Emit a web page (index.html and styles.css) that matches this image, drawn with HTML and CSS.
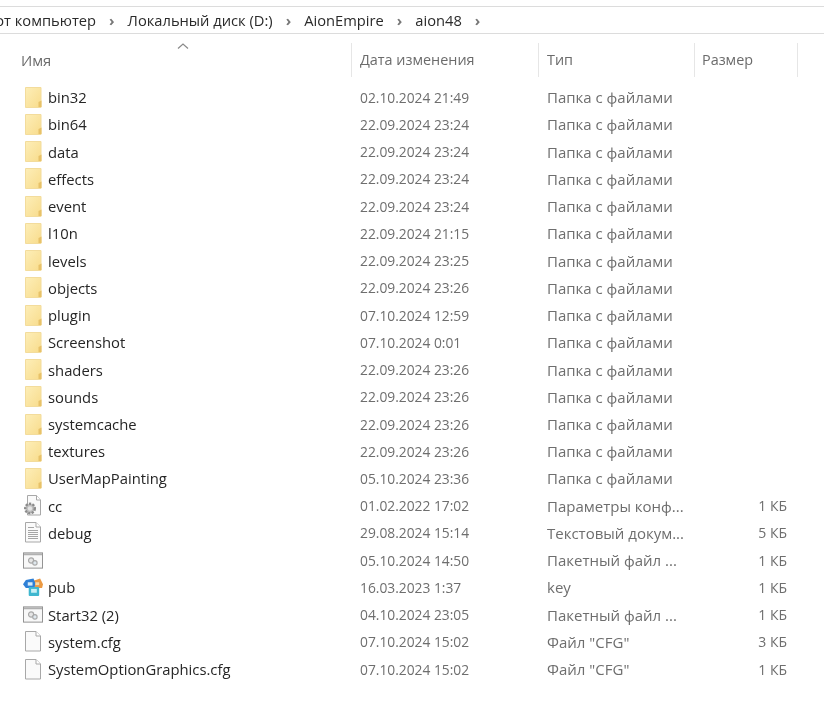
FILE: index.html
```html
<!DOCTYPE html>
<html lang="ru">
<head>
<meta charset="utf-8">
<title>aion48</title>
<link rel="stylesheet" href="styles.css">
</head>
<body>
<svg class="defs" width="0" height="0" aria-hidden="true">
  <defs>
    <linearGradient id="fg" x1="0" y1="0" x2="1" y2="1">
      <stop offset="0" stop-color="#fdeeb8"/><stop offset="1" stop-color="#f8dc8c"/>
    </linearGradient>
    <symbol id="folder" viewBox="0 0 20 21">
      <path d="M2.500 .5h15.500v20h-15.500z" fill="url(#fg)" stroke="#f3dc9c" stroke-width="1"/>
      <path d="M15.500 20v-5l3-1.500v6.500z" fill="#e8c268"/>
    </symbol>
    <symbol id="doc" viewBox="-1 0 20 21">
      <path d="M1.500 .5h10.500l4.500 4.500v15h-15z" fill="#fafafa" stroke="#a8a8a8"/>
      <path d="M12 .5v4.500h4.500" fill="#fff" stroke="#a8a8a8"/>
    </symbol>
    <symbol id="txt" viewBox="-1 0 20 21">
      <path d="M1.500 .5h10.500l4.500 4.500v15h-15z" fill="#fafafa" stroke="#a8a8a8"/>
      <path d="M12 .5v4.500h4.500" fill="#fff" stroke="#a8a8a8"/>
      <path d="M4 5.500h6M4 8.500h10M4 10.500h10M4 12.500h10M4 14.500h10M4 16.500h10" stroke="#a5a5a5" fill="none"/>
    </symbol>
    <symbol id="cfg" viewBox="0 0 20 21">
      <path d="M4.500 .5h9l4 4.500v15h-13z" fill="#fafafa" stroke="#a8a8a8"/>
      <path d="M13.500 .5v4.500h4" fill="#fff" stroke="#a8a8a8"/>
      <circle cx="7" cy="13.500" r="4.800" fill="#bdbdbd" stroke="#8c8c8c" stroke-width="2.400" stroke-dasharray="2.200 1.300"/>
      <circle cx="7" cy="13.500" r="2.200" fill="#e4e4e4"/>
    </symbol>
    <symbol id="bat" viewBox="0 0 21 21">
      <rect x=".5" y="2.500" width="20" height="16" fill="#f8f8f8" stroke="#8f8f8f"/>
      <rect x="1" y="3" width="19" height="2" fill="#b0b0b0"/>
      <circle cx="8.500" cy="10.500" r="2.700" fill="#e6e6e6" stroke="#a8a8a8" stroke-width="1.200"/>
      <circle cx="12.500" cy="13" r="2.300" fill="#dfe8ee" stroke="#a8a8a8" stroke-width="1.200"/>
    </symbol>
    <symbol id="key" viewBox="0 0 21 21">
      <path d="M11 3.500l7-2.500 3 6-1 4h-8z" fill="#ec9a43"/>
      <path d="M0 7l3-4.500 8-1.500 2 5-1 5h-9z" fill="#2f80d6"/>
      <rect x="5" y="5" width="5" height="3.500" fill="#d5ecfa"/>
      <rect x="13" y="5" width="4" height="3" fill="#f8d9a8"/>
      <rect x="6" y="10" width="11" height="9.500" rx="1" fill="#3fb7cf"/>
      <rect x="8.500" y="12" width="6" height="4" fill="#c8f0f6"/>
    </symbol>
  </defs>
</svg>

<nav class="crumbs">
  <span class="crumb">Этот компьютер</span><span class="sep">›</span>
  <span class="crumb">Локальный диск (D:)</span><span class="sep">›</span>
  <span class="crumb">AionEmpire</span><span class="sep">›</span>
  <span class="crumb">aion48</span><span class="sep">›</span>
</nav>

<div class="table">
  <header class="head">
    <div class="hcell first"><span class="sort"><svg width="12" height="6" viewBox="0 0 12 6"><path d="M1 5.500L6 1l5 4.500" fill="none" stroke="#8a8a8a" stroke-width="1.200"/></svg></span>Имя</div>
    <div class="hcell">Дата изменения</div>
    <div class="hcell">Тип</div>
    <div class="hcell tight">Размер</div>
  </header>
  <main class="rows">
    <div class="row"><span class="name"><svg class="ico"><use href="#folder"/></svg>bin32</span><span class="date">02.10.2024 21:49</span><span class="type">Папка с файлами</span><span class="size"></span></div>
    <div class="row"><span class="name"><svg class="ico"><use href="#folder"/></svg>bin64</span><span class="date">22.09.2024 23:24</span><span class="type">Папка с файлами</span><span class="size"></span></div>
    <div class="row"><span class="name"><svg class="ico"><use href="#folder"/></svg>data</span><span class="date">22.09.2024 23:24</span><span class="type">Папка с файлами</span><span class="size"></span></div>
    <div class="row"><span class="name"><svg class="ico"><use href="#folder"/></svg>effects</span><span class="date">22.09.2024 23:24</span><span class="type">Папка с файлами</span><span class="size"></span></div>
    <div class="row"><span class="name"><svg class="ico"><use href="#folder"/></svg>event</span><span class="date">22.09.2024 23:24</span><span class="type">Папка с файлами</span><span class="size"></span></div>
    <div class="row"><span class="name"><svg class="ico"><use href="#folder"/></svg>l10n</span><span class="date">22.09.2024 21:15</span><span class="type">Папка с файлами</span><span class="size"></span></div>
    <div class="row"><span class="name"><svg class="ico"><use href="#folder"/></svg>levels</span><span class="date">22.09.2024 23:25</span><span class="type">Папка с файлами</span><span class="size"></span></div>
    <div class="row"><span class="name"><svg class="ico"><use href="#folder"/></svg>objects</span><span class="date">22.09.2024 23:26</span><span class="type">Папка с файлами</span><span class="size"></span></div>
    <div class="row"><span class="name"><svg class="ico"><use href="#folder"/></svg>plugin</span><span class="date">07.10.2024 12:59</span><span class="type">Папка с файлами</span><span class="size"></span></div>
    <div class="row"><span class="name"><svg class="ico"><use href="#folder"/></svg>Screenshot</span><span class="date">07.10.2024 0:01</span><span class="type">Папка с файлами</span><span class="size"></span></div>
    <div class="row"><span class="name"><svg class="ico"><use href="#folder"/></svg>shaders</span><span class="date">22.09.2024 23:26</span><span class="type">Папка с файлами</span><span class="size"></span></div>
    <div class="row"><span class="name"><svg class="ico"><use href="#folder"/></svg>sounds</span><span class="date">22.09.2024 23:26</span><span class="type">Папка с файлами</span><span class="size"></span></div>
    <div class="row"><span class="name"><svg class="ico"><use href="#folder"/></svg>systemcache</span><span class="date">22.09.2024 23:26</span><span class="type">Папка с файлами</span><span class="size"></span></div>
    <div class="row"><span class="name"><svg class="ico"><use href="#folder"/></svg>textures</span><span class="date">22.09.2024 23:26</span><span class="type">Папка с файлами</span><span class="size"></span></div>
    <div class="row"><span class="name"><svg class="ico"><use href="#folder"/></svg>UserMapPainting</span><span class="date">05.10.2024 23:36</span><span class="type">Папка с файлами</span><span class="size"></span></div>
    <div class="row"><span class="name"><svg class="ico"><use href="#cfg"/></svg>cc</span><span class="date">01.02.2022 17:02</span><span class="type">Параметры конф...</span><span class="size">1 КБ</span></div>
    <div class="row"><span class="name"><svg class="ico"><use href="#txt"/></svg>debug</span><span class="date">29.08.2024 15:14</span><span class="type">Текстовый докум...</span><span class="size">5 КБ</span></div>
    <div class="row"><span class="name"><svg class="ico"><use href="#bat"/></svg></span><span class="date">05.10.2024 14:50</span><span class="type">Пакетный файл ...</span><span class="size">1 КБ</span></div>
    <div class="row"><span class="name"><svg class="ico"><use href="#key"/></svg>pub</span><span class="date">16.03.2023 1:37</span><span class="type">key</span><span class="size">1 КБ</span></div>
    <div class="row"><span class="name"><svg class="ico"><use href="#bat"/></svg>Start32 (2)</span><span class="date">04.10.2024 23:05</span><span class="type">Пакетный файл ...</span><span class="size">1 КБ</span></div>
    <div class="row"><span class="name"><svg class="ico"><use href="#doc"/></svg>system.cfg</span><span class="date">07.10.2024 15:02</span><span class="type">Файл "CFG"</span><span class="size">3 КБ</span></div>
    <div class="row"><span class="name"><svg class="ico"><use href="#doc"/></svg>SystemOptionGraphics.cfg</span><span class="date">07.10.2024 15:02</span><span class="type">Файл "CFG"</span><span class="size">1 КБ</span></div>
  </main>
</div>
</body>
</html>
```

FILE: styles.css
```css
html, body {
  margin: 0;
  padding: 0;
  background: #fff;
  overflow: hidden;
  height: 100%;
}
body {
  font-family: "Open Sans", "Noto Sans", sans-serif;
  font-size: 14px;
  color: #1f1f1f;
}
.defs { position: absolute; }

.crumbs, .table { filter: blur(0.35px); }

.crumbs {
  margin-top: 6px;
  height: 26px;
  border-top: 1px solid #dcdcdc;
  border-bottom: 1px solid #dcdcdc;
  display: flex;
  align-items: center;
  margin-left: -21px;
  white-space: nowrap;
  color: #2a2a2a;
  font-size: 14.700px;
}
.sep {
  color: #777;
  font-size: 15px;
  margin: 0 13px;
  font-weight: 700;
}

.table { padding-top: 9px; }

.head {
  display: grid;
  grid-template-columns: 352px 187px 156px 103px;
  height: 34px;
}
.hcell {
  box-sizing: border-box;
  border-right: 1px solid #e6e6e6;
  padding: 7px 0 0 8px;
  color: #6b6b6b;
  font-size: 14.400px;
  position: relative;
}
.hcell.first { padding-left: 21px; font-size: 14.800px; }
.hcell.tight { padding-left: 7px; }
.sort {
  position: absolute;
  left: 177px;
  top: 0;
  line-height: 0;
}

.rows {
  margin-top: 6.600px;
  display: grid;
  grid-auto-rows: 27.240px;
}
.row {
  display: grid;
  grid-template-columns: 360px 187px 155px 85px;
  align-items: center;
  color: #6e6e6e;
}
.name {
  display: flex;
  align-items: center;
  color: #262626;
  padding-left: 23px;
  height: 100%;
  font-size: 14.800px;
}
.ico {
  width: 20px;
  height: 21px;
  margin-right: 5px;
  flex: none;
}
.date { white-space: nowrap; font-size: 13.800px; }
.type { white-space: nowrap; font-size: 15px; }
.size { text-align: right; white-space: nowrap; }
```
